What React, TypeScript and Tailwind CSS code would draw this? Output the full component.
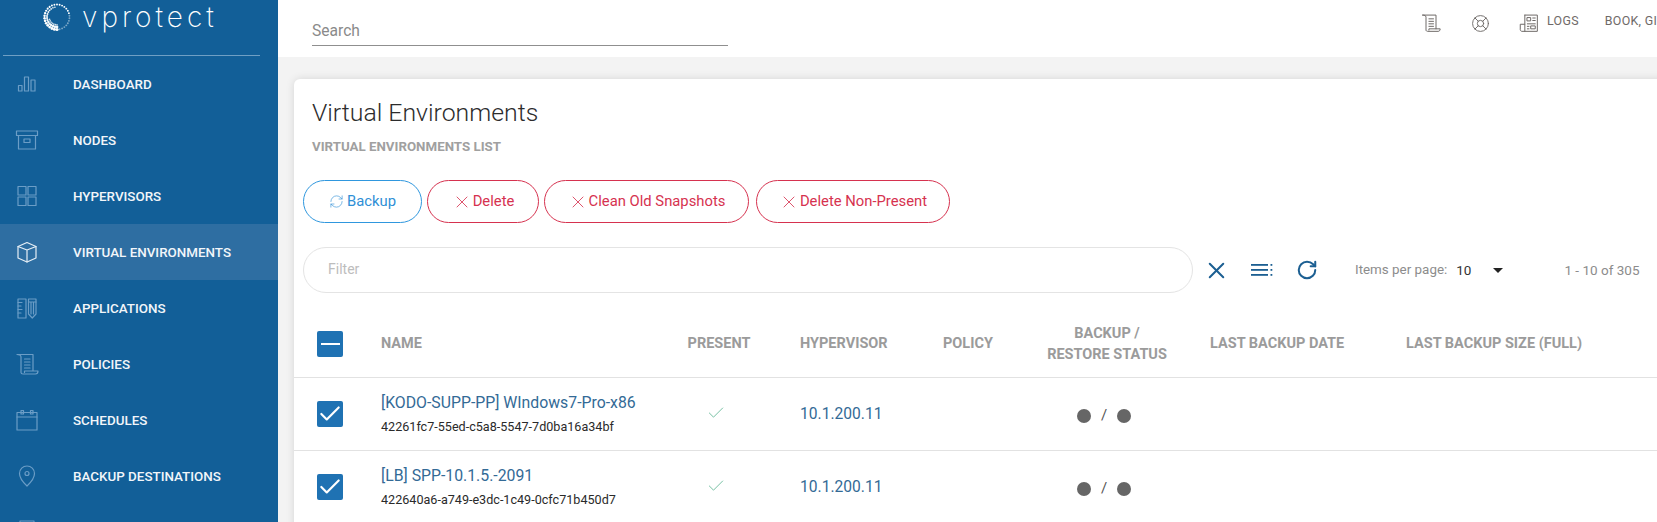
import React from 'react';
import { Check, LifeBuoy, RefreshCw, RotateCw, X } from 'lucide-react';

type IconProps = { className?: string };

const Svg = ({ className, children }: IconProps & { children: React.ReactNode }) => (
  <svg viewBox="0 0 24 24" fill="none" stroke="currentColor" strokeWidth="1.2" strokeLinejoin="round" strokeLinecap="round" className={className}>
    {children}
  </svg>
);

const BarsIcon = (p: IconProps) => (
  <Svg {...p}>
    <rect x="3.5" y="13.5" width="3.5" height="5.5" />
    <rect x="9.5" y="5" width="4" height="14" />
    <rect x="16" y="8" width="4" height="11" />
  </Svg>
);
const ArchiveIcon = (p: IconProps) => (
  <Svg {...p}>
    <rect x="1.5" y="3" width="21" height="4.5" />
    <path d="M3.5 7.5V21H20.5V7.5" />
    <rect x="9" y="11" width="6" height="3.5" />
  </Svg>
);
const GridIcon = (p: IconProps) => (
  <Svg {...p}>
    <rect x="3" y="2.5" width="8" height="8.5" />
    <rect x="13" y="2.5" width="8" height="8.5" />
    <rect x="3" y="13" width="8" height="8.5" />
    <rect x="13" y="13" width="8" height="8.5" />
  </Svg>
);
const CubeIcon = (p: IconProps) => (
  <Svg {...p}>
    <path d="M12 2.5L21 6.5V18L12 22L3 18V6.5Z" />
    <path d="M3 6.5L12 10L21 6.5M12 10V22" />
  </Svg>
);
const RulerPencilIcon = (p: IconProps) => (
  <Svg {...p}>
    <rect x="3" y="3" width="8" height="19" />
    <path d="M3 6.5H7M3 10H6M3 13.5H7M3 17H6" />
    <path d="M13.5 3H21V18L17.25 22L13.5 18Z" />
    <path d="M13.5 6H21M16 6V18M18.5 6V18" />
  </Svg>
);
const ScrollIcon = (p: IconProps) => (
  <Svg {...p}>
    <path d="M2 2.5H18V19M2 2.5C4 2.5 6 3 6 5V20.5C6 21.5 7 22 8 22H20.5C22 22 23 21 23 19H9.5V20.5" />
    <path d="M9.5 7H15M9.5 10H15M9.5 13H15M9.5 16H15" />
  </Svg>
);
const CalendarIcon = (p: IconProps) => (
  <Svg {...p}>
    <path d="M2 4.5H22V22H2Z" />
    <path d="M2 9H22" />
    <rect x="6" y="2.5" width="2.5" height="3.5" />
    <rect x="15.5" y="2.5" width="2.5" height="3.5" />
  </Svg>
);
const PinIcon = (p: IconProps) => (
  <Svg {...p}>
    <path d="M12 22C12 22 4.5 15 4.5 9.5A7.5 7.5 0 0 1 19.5 9.5C19.5 15 12 22 12 22Z" />
    <circle cx="12" cy="9.5" r="2" />
  </Svg>
);
const ClippedIcon = (p: IconProps) => (
  <Svg {...p}>
    <path d="M5 1H19V22H5Z" />
  </Svg>
);
const NewspaperIcon = (p: IconProps) => (
  <Svg {...p}>
    <path d="M7 2.5H22V22H3.5C2.5 22 1.5 21 1.5 20V13.5H7V22M7 2.5V13.5" />
    <rect x="10" y="5.5" width="4" height="4" />
    <path d="M16.5 6H19.5M16.5 9H19.5M10 13H19.5" />
    <rect x="14.5" y="15.5" width="5" height="3.5" />
    <path d="M10 16H12M10 19H12" />
  </Svg>
);

// dotted ring of the logo: heavy rows on the lower left, thinning out clockwise
const LogoRing = () => {
  const dots: { x: number; y: number; r: number; o: number }[] = [];
  for (let i = 0; i < 30; i++) {
    const t = i / 30; // 0 at bottom centre, running clockwise through left, top, right
    const a = Math.PI / 2 + t * Math.PI * 2;
    const heavy = Math.max(0, 1 - t * 2.2);
    const fade = t > 0.7 ? 0.45 : 1;
    dots.push({ x: 14 + Math.cos(a) * 12.5, y: 14 + Math.sin(a) * 12.5, r: 0.95 + heavy * 0.6, o: fade });
    if (t < 0.5) {
      dots.push({ x: 14 + Math.cos(a) * 10, y: 14 + Math.sin(a) * 10, r: 0.8 + heavy * 0.6, o: 0.95 });
    }
    if (t < 0.22) {
      dots.push({ x: 14 + Math.cos(a) * 7.8, y: 14 + Math.sin(a) * 7.8, r: 0.8, o: 0.8 });
    }
  }
  return (
    <svg viewBox="0 0 28 28" className="w-[28px] h-[28px] shrink-0">
      {dots.map((d, i) => (
        <circle key={i} cx={d.x} cy={d.y} r={d.r} fill="#fff" opacity={d.o} />
      ))}
    </svg>
  );
};

const navItems: { label: string; icon: (p: IconProps) => React.ReactElement; active?: boolean }[] = [
  { label: 'Dashboard', icon: BarsIcon },
  { label: 'Nodes', icon: ArchiveIcon },
  { label: 'Hypervisors', icon: GridIcon },
  { label: 'Virtual Environments', icon: CubeIcon, active: true },
  { label: 'Applications', icon: RulerPencilIcon },
  { label: 'Policies', icon: ScrollIcon },
  { label: 'Schedules', icon: CalendarIcon },
  { label: 'Backup Destinations', icon: PinIcon },
  { label: '', icon: ClippedIcon },
];

const rows = [
  { name: '[KODO-SUPP-PP] WIndows7-Pro-x86', id: '42261fc7-55ed-c5a8-5547-7d0ba16a34bf' },
  { name: '[LB] SPP-10.1.5.-2091', id: '422640a6-a749-e3dc-1c49-0cfc71b450d7' },
];

const cols = 'grid grid-cols-[88px_293px_86px_182px_69px_190px_204px_1fr] items-center';

const DangerButton = ({ label, className }: { label: string; className: string }) => (
  <button className={`h-[43px] rounded-full border border-[#d6324f] text-[#d6324f] text-[14.8px] flex items-center justify-center gap-[1px] ${className}`}>
    <X className="w-[20px] h-[20px]" strokeWidth={1} />
    {label}
  </button>
);

const TickBox = ({ children }: { children: React.ReactNode }) => (
  <div className="ml-[23px] w-[26px] h-[26px] rounded-[2px] bg-[#1f72b3] flex items-center justify-center">{children}</div>
);

export default function App() {
  return (
    <div className="flex w-[1657px] h-[522px] overflow-hidden bg-[#f3f3f3] font-['Roboto',sans-serif]">
      {/* Sidebar */}
      <aside className="w-[278px] shrink-0 bg-[#125f98] overflow-hidden">
        <div className="h-[56px] pr-[18px] pl-[3px]">
          <div className="h-[56px] border-b border-[#6f9fc4] flex items-start pl-[40px] pt-[3px] gap-[11px]">
            <LogoRing />
            <span className="font-['Inter',sans-serif] font-extralight text-white text-[28px] leading-[28px] tracking-[4px]">vprotect</span>
          </div>
        </div>
        <nav>
          {navItems.map(({ label, icon: Icon, active }) => (
            <div key={label} className={`h-[56px] flex items-center pl-[15px] gap-[34px] ${active ? 'bg-[#2e6ea2]' : ''}`}>
              <Icon className={`w-[24px] h-[24px] shrink-0 ${active ? 'text-[#e6eff6]' : 'text-[#6b9dc6]'}`} />
              {label && <span className="uppercase text-[13.4px] font-medium text-[#f2f6fa] pt-[2px]">{label}</span>}
            </div>
          ))}
        </nav>
      </aside>

      <div className="flex-1 min-w-0">
        {/* Top bar */}
        <header className="h-[57px] bg-white flex items-start">
          <div className="shrink-0 ml-[34px] mt-[19px] w-[416px] h-[27px] border-b border-[#8f8f8f] text-[15.6px] leading-[24px] text-[#8a8a8a]">Search</div>
          <div className="shrink-0 ml-[693px] mt-[13px] flex items-center text-[#6f6a68]">
            <ScrollIcon className="w-[20px] h-[20px]" />
            <LifeBuoy className="w-[19px] h-[19px] ml-[30px]" strokeWidth={1.2} />
            <NewspaperIcon className="w-[20px] h-[20px] ml-[29px]" />
            <span className="text-[12.4px] ml-[8px] tracking-[0.3px] -mt-[3px]">LOGS</span>
            <span className="text-[12.4px] ml-[26px] tracking-[0.3px] -mt-[3px] whitespace-nowrap">BOOK, GIL</span>
          </div>
        </header>

        {/* Card */}
        <main className="ml-[16px] mt-[22px] w-[1400px] h-[500px] bg-white rounded-tl-[6px] shadow-[0_0_8px_rgba(0,0,0,0.12)]">
          <div className="pt-[18px] pl-[18px]">
            <h1 className="text-[24.8px] leading-[32px] font-light text-[#2c2c2c]">Virtual Environments</h1>
            <h2 className="mt-[10px] text-[13.3px] leading-[16px] font-bold text-[#a0a0a0] uppercase">Virtual Environments List</h2>
          </div>

          <div className="mt-[25px] ml-[9px] flex items-center gap-[5px]">
            <button className="w-[119px] h-[43px] rounded-full border border-[#2f97de] text-[#2f8fd6] text-[14.8px] flex items-center justify-center gap-[3px]">
              <RefreshCw className="w-[15px] h-[15px]" strokeWidth={1} />
              Backup
            </button>
            <DangerButton label="Delete" className="w-[112px]" />
            <DangerButton label="Clean Old Snapshots" className="w-[205px]" />
            <DangerButton label="Delete Non-Present" className="w-[194px] ml-[2px]" />
          </div>

          <div className="mt-[24px] ml-[9px] h-[46px] flex items-center">
            <div className="w-[890px] h-[46px] rounded-full border border-[#e4e4e4] pl-[24px] pb-[2px] flex items-center text-[14px] text-[#bdbdbd]">Filter</div>
            <X className="ml-[10px] w-[27px] h-[27px] text-[#1c5f92]" strokeWidth={1.8} />
            <svg viewBox="0 0 22 14" className="ml-[21px] w-[22px] h-[14px] text-[#1c5f92]" fill="currentColor">
              <rect x="0" y="1" width="17" height="1.8" />
              <rect x="0" y="6" width="17" height="1.8" />
              <rect x="0" y="11" width="17" height="1.8" />
              <rect x="19.5" y="1" width="1.8" height="1.8" />
              <rect x="19.5" y="6" width="1.8" height="1.8" />
              <rect x="19.5" y="11" width="1.8" height="1.8" />
            </svg>
            <RotateCw className="ml-[23px] w-[22px] h-[22px] text-[#1c5f92]" strokeWidth={2.2} />
            <span className="ml-[37px] text-[13.4px] text-[#8c8c8c]">Items per page:</span>
            <span className="ml-[9px] text-[13.5px] text-[#333]">10</span>
            <span className="ml-[22px] w-0 h-0 border-x-[5px] border-x-transparent border-t-[5px] border-t-[#222]" />
            <span className="ml-[61px] text-[13.5px] text-[#8c8c8c]">1 - 10 of 305</span>
          </div>

          {/* Table */}
          <div className={`${cols} mt-[17px] h-[68px] border-b border-[#e2e2e2] text-[14.5px] font-bold text-[#9b9b9b] uppercase`}>
            <TickBox>
              <div className="w-[19px] h-[2px] bg-white" />
            </TickBox>
            <div className="-ml-px">Name</div>
            <div className="text-center pl-[2px]">Present</div>
            <div className="pl-[39px]">Hypervisor</div>
            <div>Policy</div>
            <div className="text-center leading-[21px]">Backup /<br />Restore Status</div>
            <div className="pl-[8px]">Last Backup Date</div>
            <div>Last Backup Size (Full)</div>
          </div>
          {rows.map((row) => (
            <div key={row.id} className={`${cols} h-[73px] border-b border-[#e2e2e2]`}>
              <TickBox>
                <Check className="w-[26px] h-[26px] text-white" strokeWidth={2} />
              </TickBox>
              <div className="-mt-[1px] -ml-px">
                <div className="text-[15.8px] leading-[20px] text-[#336a96] whitespace-nowrap">{row.name}</div>
                <div className="mt-[6px] text-[12.6px] leading-[16px] text-[#2a2a2a] whitespace-nowrap">{row.id}</div>
              </div>
              <div className="flex justify-center -mt-[2px] -ml-[5px]">
                <Check className="w-[20px] h-[20px] text-[#5cb592]" strokeWidth={1} />
              </div>
              <div className="pl-[39px] pt-[2px] text-[15.6px] text-[#336a96]">10.1.200.11</div>
              <div />
              <div className="flex items-center justify-center gap-[10px] text-[15px] text-[#555] pt-[3px] pr-[6px]">
                <span className="w-[14px] h-[14px] rounded-full bg-[#666]" />
                /
                <span className="w-[14px] h-[14px] rounded-full bg-[#666]" />
              </div>
              <div />
              <div />
            </div>
          ))}
        </main>
      </div>
    </div>
  );
}
